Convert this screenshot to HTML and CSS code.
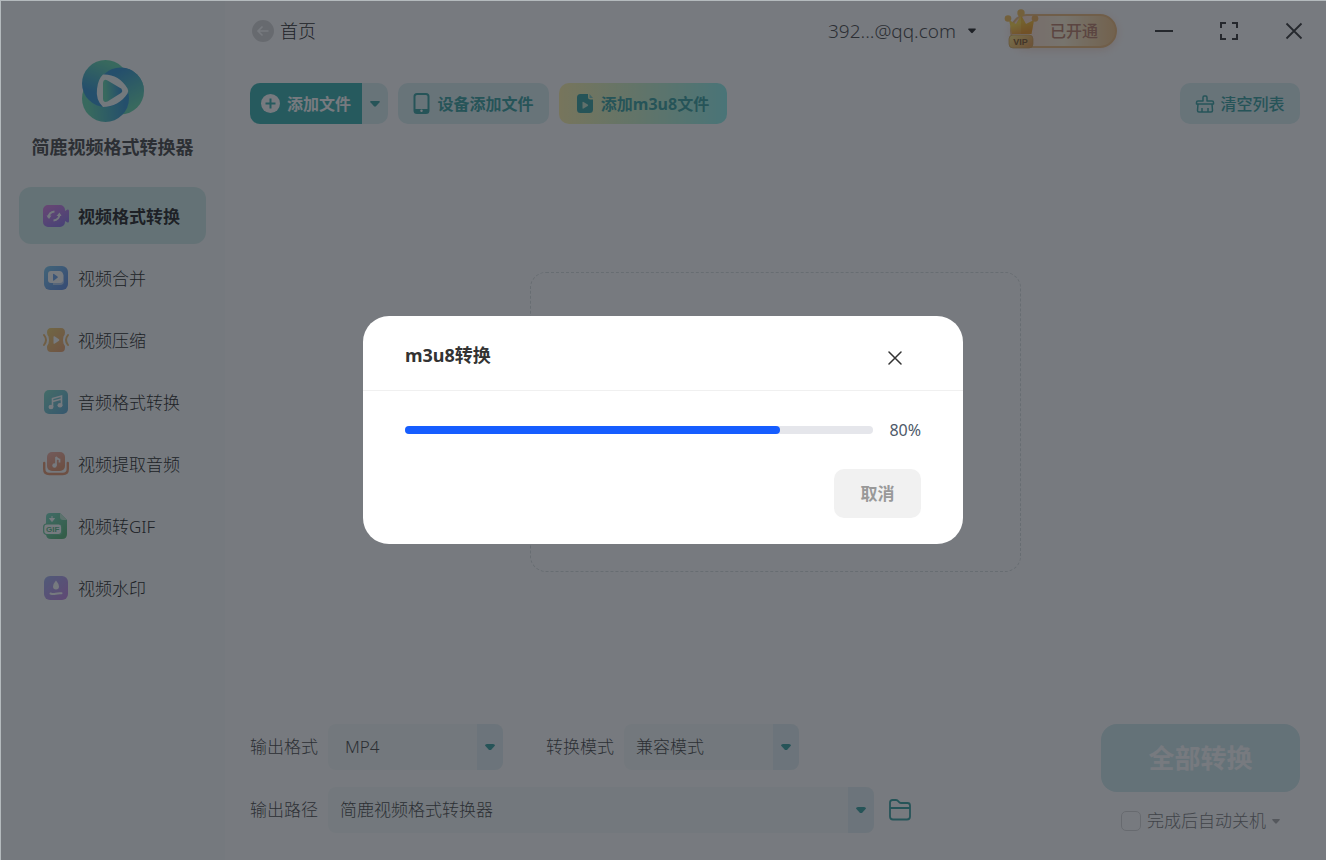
FILE: index.html
```html
<!DOCTYPE html>
<html lang="zh-CN">
<head>
    <meta charset="UTF-8">
    <meta name="viewport" content="width=device-width, initial-scale=1.0">
    <title>简鹿视频格式转换器</title>
    <link rel="stylesheet" href="styles.css">
</head>
<body>
    <div class="window">
        <!-- Sidebar -->
        <aside class="sidebar">
            <svg class="logo" viewBox="0 0 62 62" aria-hidden="true">
                <defs>
                    <linearGradient id="logo-a" x1="0.7" y1="0" x2="0.3" y2="1"><stop offset="0.1" stop-color="#48cf9f"/><stop offset="0.75" stop-color="#0f82c8"/></linearGradient>
                    <linearGradient id="logo-b" x1="0.2" y1="0.1" x2="0.7" y2="1"><stop offset="0.1" stop-color="#0f82c8"/><stop offset="0.9" stop-color="#48cf9f"/></linearGradient>
                    <linearGradient id="logo-c" x1="0" y1="0.5" x2="1" y2="0.4"><stop offset="0.1" stop-color="#48cf9f"/><stop offset="0.9" stop-color="#0f82c8"/></linearGradient>
                    <clipPath id="logo-top"><path d="M15 0H62V31H15z"/></clipPath>
                </defs>
                <circle cx="38.500" cy="31" r="23.500" fill="url(#logo-b)"/>
                <circle cx="23.500" cy="38.500" r="23.500" fill="url(#logo-c)"/>
                <circle cx="23.500" cy="23.500" r="23.500" fill="url(#logo-a)"/>
                <circle cx="38.500" cy="31" r="23.500" fill="url(#logo-b)" clip-path="url(#logo-top)"/>
                <path d="M21 14.500C31 14 40 19 45.500 28.500Q47 31 45.500 33.500C40 42 31 47 21 47Q13.500 40 15 29Q16 19 21 14.500z" fill="#f6fcfb"/>
                <path d="M21 22.500Q21.500 18.500 25.500 20.500L39 28.500Q41.500 31 39 33L25.500 41.500Q21.500 43 21 39z" fill="url(#logo-c)"/>
            </svg>
            <h1 class="app-name">简鹿视频格式转换器</h1>
            <nav class="menu">
                <a class="menu-item active" href="#">
                    <svg viewBox="0 0 26 26" aria-hidden="true">
                        <defs><linearGradient id="g1" x1="0" y1="0" x2="0.6" y2="1"><stop stop-color="#e05ae0"/><stop offset="1" stop-color="#7a50ea"/></linearGradient></defs>
                        <path d="M5 2h12a5 5 0 0 1 5 5v1l2.500-1.500Q26 6 26 8v10q0 2-1.500 1.500L22 18v1a5 5 0 0 1-5 5H5a5 5 0 0 1-5-5V7a5 5 0 0 1 5-5z" fill="url(#g1)"/>
                        <path d="M5.500 14.500Q6 9 11.500 8.500M16.500 11.500Q16 17 10.500 17.500" fill="none" stroke="#fff" stroke-width="2"/>
                        <path d="M3.500 12.500h5l-2.500 3.500zM13.500 13h5l-2-3.500z" fill="#fff"/>
                    </svg>
                    <span>视频格式转换</span>
                </a>
                <a class="menu-item" href="#">
                    <svg viewBox="0 0 26 26" aria-hidden="true">
                        <defs><linearGradient id="g2" x1="0" y1="0" x2="1" y2="1"><stop stop-color="#50b8ea"/><stop offset="1" stop-color="#2a62dc"/></linearGradient></defs>
                        <rect x="1" y="1" width="24" height="24" rx="6" fill="url(#g2)"/>
                        <path d="M9 7h9l3 3v6q0 4-4 4H10z" fill="#fff" opacity="0.500"/>
                        <path d="M8 6h8q4 0 4 4v5q0 3-3 3H8q-3 0-3-3V9q0-3 3-3z" fill="#fff"/>
                        <path d="M10 9.500q0-1 1-.5l3.500 2.500q.8.700 0 1.200L11 15.500q-1 .500-1-.5z" fill="#3a86e4"/>
                    </svg>
                    <span>视频合并</span>
                </a>
                <a class="menu-item" href="#">
                    <svg viewBox="0 0 26 26" aria-hidden="true">
                        <defs><linearGradient id="g3" x1="0" y1="0" x2="0.8" y2="1"><stop stop-color="#ecc03c"/><stop offset="1" stop-color="#e8863c"/></linearGradient></defs>
                        <path d="M8 1h10q4 0 4 4.500 0 2-1.500 4-1 3.500 0 7 1.500 2 1.500 4 0 4.500-4 4.500H8q-4 0-4-4.500 0-2 1.500-4 1-3.500 0-7Q4 7.500 4 5.500 4 1 8 1z" fill="url(#g3)"/>
                        <path d="M1 8q4 5 0 10M25 8q-4 5 0 10" fill="none" stroke="#eaa43c" stroke-width="2" stroke-linecap="round"/>
                        <path d="M10.500 10q0-1.200 1-.7l4.500 3q.8.700 0 1.400l-4.500 3q-1 .500-1-.7z" fill="#fff"/>
                    </svg>
                    <span>视频压缩</span>
                </a>
                <a class="menu-item" href="#">
                    <svg viewBox="0 0 26 26" aria-hidden="true">
                        <defs><linearGradient id="g4" x1="0" y1="0" x2="1" y2="1"><stop stop-color="#58d2b4"/><stop offset="1" stop-color="#2a8cc8"/></linearGradient></defs>
                        <rect x="1" y="1" width="24" height="24" rx="5" fill="url(#g4)"/>
                        <path d="M9.500 18V9.500L18.500 7V16M9.500 12.500L18.500 10" fill="none" stroke="#fff" stroke-width="1.600"/>
                        <ellipse cx="8" cy="18" rx="2.500" ry="2.200" fill="#fff"/><ellipse cx="17" cy="16.200" rx="2.500" ry="2.200" fill="#fff"/>
                    </svg>
                    <span>音频格式转换</span>
                </a>
                <a class="menu-item" href="#">
                    <svg viewBox="0 0 26 26" aria-hidden="true">
                        <defs><linearGradient id="g5" x1="0" y1="0" x2="0.5" y2="1"><stop stop-color="#f0988a"/><stop offset="1" stop-color="#e0743c"/></linearGradient></defs>
                        <path d="M1.200 12v6q0 5 5 5h13.600q5 0 5-5v-6" fill="none" stroke="#e0743c" stroke-width="2.400" stroke-linecap="round"/>
                        <rect x="4" y="1" width="18" height="19" rx="5" fill="url(#g5)"/>
                        <path d="M13 14.500V6q1 2 3.500 2.500v3" fill="none" stroke="#fff" stroke-width="1.700"/>
                        <circle cx="11.500" cy="14.500" r="2.200" fill="#fff"/>
                    </svg>
                    <span>视频提取音频</span>
                </a>
                <a class="menu-item" href="#">
                    <svg viewBox="0 0 26 26" aria-hidden="true">
                        <defs><linearGradient id="g6" x1="0" y1="0" x2="0.7" y2="1"><stop stop-color="#4ccfae"/><stop offset="1" stop-color="#22a04c"/></linearGradient></defs>
                        <path d="M7 0h10l7 7v14q0 5-5 5H8q-5 0-5-5V4q0-4 4-4z" fill="url(#g6)"/>
                        <path d="M17 0v4q0 3 3 3h4z" fill="#a8e6c4"/>
                        <path d="M9 3v3M6.500 5.500h5L9 8.500z" stroke="#fff" fill="#fff"/>
                        <rect x="0.700" y="11" width="18" height="10.500" rx="3" fill="#fff" stroke="#35b878" stroke-width="1.200"/>
                        <text class="gif-mark" x="9.700" y="19.200" text-anchor="middle">GIF</text>
                    </svg>
                    <span>视频转GIF</span>
                </a>
                <a class="menu-item" href="#">
                    <svg viewBox="0 0 26 26" aria-hidden="true">
                        <defs><linearGradient id="g7" x1="0" y1="0" x2="1" y2="1"><stop stop-color="#8098ea"/><stop offset="1" stop-color="#b45adc"/></linearGradient></defs>
                        <rect x="1" y="1" width="24" height="24" rx="6" fill="url(#g7)"/>
                        <path d="M13 5.500Q16 9 16 11.500a3 3 0 0 1-6 0Q10 9 13 5.500z" fill="#fff"/>
                        <path d="M7.500 18.500q2.500 1 5 .3t6-.5" fill="none" stroke="#fff" stroke-width="2" stroke-linecap="round"/>
                    </svg>
                    <span>视频水印</span>
                </a>
            </nav>
        </aside>

        <main class="main">
            <!-- Title bar -->
            <header class="titlebar">
                <button class="back" type="button">
                    <svg width="22" height="22" viewBox="0 0 22 22" aria-hidden="true"><circle cx="11" cy="11" r="11" fill="#d8d8d8"/><path d="M16.500 11H6M10.500 6.500L6 11l4.500 4.500" fill="none" stroke="#fff" stroke-width="1.600"/></svg>
                    首页
                </button>
                <button class="account" type="button">
                    392...@qq.com
                    <svg width="8" height="6" viewBox="0 0 10 6" aria-hidden="true"><path d="M1 0h8q1.300.300.600 1.200L6 5.300q-1 .9-2 0L.4 1.200Q-.3.300 1 0z" fill="currentColor"/></svg>
                </button>
                <button class="vip" type="button">
                    <svg class="crown" width="36" height="41" viewBox="0 0 36 41" aria-hidden="true">
                        <defs>
                            <linearGradient id="crown" x1="0" y1="0" x2="0.4" y2="1"><stop stop-color="#ffc93a"/><stop offset="0.5" stop-color="#ffd84a"/><stop offset="1" stop-color="#f5a035"/></linearGradient>
                            <linearGradient id="plate" x1="0" y1="0" x2="1" y2="0.6"><stop stop-color="#ffe680"/><stop offset="1" stop-color="#e8a050"/></linearGradient>
                        </defs>
                        <path d="M5 11l7 4 5-9 5 9 8-4-2.500 14H8z" fill="url(#crown)"/>
                        <path d="M17 6l5 9 8-4-2.500 14H17z" fill="#e88a00" opacity="0.300"/>
                        <circle cx="17" cy="4" r="3.700" fill="#f5bf55"/><circle cx="4" cy="9.500" r="3.300" fill="#f5bf55"/><circle cx="31" cy="9.500" r="3.300" fill="#f0b055"/>
                        <rect x="5" y="26" width="24" height="13" rx="4" fill="url(#plate)" stroke="#d0a050" stroke-width="0.700"/>
                        <text class="vip-mark" x="16.500" y="36" text-anchor="middle">VIP</text>
                    </svg>
                    已开通
                </button>
                <div class="window-controls">
                    <button type="button" aria-label="最小化"><svg width="18" height="18" viewBox="0 0 18 18"><path d="M0 9h18" stroke="currentColor" stroke-width="2"/></svg></button>
                    <button type="button" aria-label="最大化"><svg width="18" height="18" viewBox="0 0 18 18"><path d="M1 6V1h5M12 1h5v5M17 12v5h-5M6 17H1v-5" fill="none" stroke="currentColor" stroke-width="2"/></svg></button>
                    <button type="button" aria-label="关闭"><svg width="18" height="18" viewBox="0 0 18 18"><path d="M1.500 1.500l15 15M16.500 1.500l-15 15" stroke="currentColor" stroke-width="1.800"/></svg></button>
                </div>
            </header>

            <!-- Toolbar -->
            <div class="toolbar">
                <div class="split">
                    <button class="btn primary" type="button">
                        <svg width="19" height="19" viewBox="0 0 19 19" aria-hidden="true"><circle cx="9.500" cy="9.500" r="9.500" fill="#fff"/><path d="M9.500 4.500v10M4.500 9.500h10" stroke="#36b0ad" stroke-width="2"/></svg>
                        添加文件
                    </button>
                    <button class="split-arrow" type="button" aria-label="更多">
                        <svg width="10" height="6" viewBox="0 0 10 6"><path d="M1 0h8q1.300.300.600 1.200L6 5.300q-1 .9-2 0L.4 1.200Q-.3.300 1 0z" fill="currentColor"/></svg>
                    </button>
                </div>
                <button class="btn device" type="button">
                    <svg width="17" height="21" viewBox="0 0 17 21" aria-hidden="true"><rect x="1.500" y="1" width="14" height="19" rx="2.500" fill="none" stroke="currentColor" stroke-width="2"/><path d="M2 16h13v3H2z" fill="currentColor"/><circle cx="8.500" cy="17.800" r="1.200" fill="#fff"/></svg>
                    设备添加文件
                </button>
                <button class="btn m3u8" type="button">
                    <svg width="17" height="19" viewBox="0 0 17 19" aria-hidden="true"><path d="M3.500 0H11v3q0 2.500 2.500 2.500H16V15.500q0 3.500-3.500 3.500h-9Q0 19 0 15.500v-12Q0 0 3.500 0z" fill="currentColor"/><path d="M12.500 0L16 4h-3.500z" fill="#7cc9c0"/><path d="M5.500 8.500v5.500q0 1 1 .5l4.200-2.500q1-.7 0-1.400L6.500 8q-1-.5-1 .5z" fill="#c5e6cc"/></svg>
                    添加m3u8文件
                </button>
                <button class="btn clear" type="button">
                    <svg width="20" height="18" viewBox="0 0 20 18" aria-hidden="true"><path d="M1.500 9V7.500Q1.500 6 3 6h5V2.500Q8 1 9.200 1h1.600Q12 1 12 2.500V6h5q1.500 0 1.500 1.500V9zM3 9l-.5 6.500q0 1.500 1.500 1.500h12q1.500 0 1.500-1.500L17 9M7 13v4M13 13v4" fill="none" stroke="currentColor" stroke-width="1.500" stroke-linejoin="round"/></svg>
                    清空列表
                </button>
            </div>

            <div class="workspace">
                <div class="dropzone"></div>
            </div>

            <!-- Output settings -->
            <footer class="footer">
                <div class="settings">
                    <div class="row">
                        <label for="format">输出格式</label>
                        <div class="picker format">
                            <select id="format"><option>MP4</option></select>
                            <span class="picker-arrow"></span>
                        </div>
                        <label class="mode-label" for="mode">转换模式</label>
                        <div class="picker">
                            <select id="mode"><option>兼容模式</option></select>
                            <span class="picker-arrow"></span>
                        </div>
                    </div>
                    <div class="row">
                        <label for="path">输出路径</label>
                        <div class="picker path">
                            <select id="path"><option>简鹿视频格式转换器</option></select>
                            <span class="picker-arrow"></span>
                        </div>
                        <button class="folder" type="button" aria-label="打开文件夹">
                            <svg width="22" height="22" viewBox="0 0 22 22"><path d="M1 17.500V3.500Q1 1 3.500 1H7q1.500 0 2.500 1.500t2.500 1.500h6.500Q21 4 21 6.500v11q0 3-3 3H4q-3 0-3-3zM1 9h20" fill="none" stroke="currentColor" stroke-width="1.800"/></svg>
                        </button>
                    </div>
                </div>
                <div class="actions">
                    <button class="convert-all" type="button">全部转换</button>
                    <div class="shutdown">
                        <input type="checkbox" id="shutdown">
                        <label for="shutdown">完成后自动关机</label>
                        <svg width="8" height="5" viewBox="0 0 10 6" aria-hidden="true"><path d="M1 0h8q1.300.300.600 1.200L6 5.300q-1 .9-2 0L.4 1.200Q-.3.300 1 0z" fill="currentColor"/></svg>
                    </div>
                </div>
            </footer>
        </main>
    </div>

    <!-- Progress dialog -->
    <div class="mask">
        <div class="dialog" role="dialog" aria-labelledby="dialog-title">
            <div class="dialog-header">
                <h2 id="dialog-title">m3u8转换</h2>
                <button class="dialog-close" type="button" aria-label="关闭">
                    <svg width="14" height="14" viewBox="0 0 14 14"><path d="M1 1l12 12M13 1L1 13" stroke="currentColor" stroke-width="1.500" stroke-linecap="round"/></svg>
                </button>
            </div>
            <div class="dialog-body">
                <div class="progress-row">
                    <progress id="progress" value="80" max="100"></progress>
                    <label for="progress">80%</label>
                </div>
                <button class="cancel" type="button">取消</button>
            </div>
        </div>
    </div>
</body>
</html>
```
FILE: styles.css
```css
/* Global Styles */
* {
    box-sizing: border-box;
}
body {
    margin: 0;
    font-family: "Noto Sans", "Noto Sans CJK SC", sans-serif;
    font-size: 17px;
    font-weight: 300;
    line-height: 24px;
    color: #222;
    background: #fff;
}
/* thin light edge of the app window */
body::after {
    content: "";
    position: fixed;
    inset: 0;
    border-top: 1px solid #b4babd;
    border-left: 1px solid #b4babd;
    pointer-events: none;
}
button, select {
    font: inherit;
    color: inherit;
    background: none;
    border: none;
    padding: 0;
    margin: 0;
    cursor: pointer;
}
svg {
    display: block;
    flex: none;
}
h1, h2 {
    margin: 0;
    font-size: 18px;
    font-weight: bold;
}
.window {
    display: flex;
    min-height: 100vh;
}

/* Sidebar */
.sidebar {
    flex: none;
    width: 225px;
    padding: 60px 19px 0;
    background: #fafdfc;
}
.logo {
    width: 62px;
    height: 62px;
    margin: 0 auto;
    opacity: 0.85;
}
.app-name {
    margin: 13px 0 28px;
    text-align: center;
    white-space: nowrap;
    color: #444;
}
.menu {
    display: flex;
    flex-direction: column;
    gap: 5px;
}
.menu-item {
    display: flex;
    align-items: center;
    gap: 9px;
    height: 57px;
    padding: 0 24px;
    border-radius: 12px;
    color: #222;
    text-decoration: none;
    white-space: nowrap;
}
.menu-item span {
    padding-top: 2px;
}
.menu-item svg {
    width: 26px;
    height: 26px;
    opacity: 0.75;
}
.menu-item.active {
    background: #d0ece8;
    font-weight: bold;
}
.gif-mark {
    font: bold 8px "Liberation Sans", sans-serif;
    fill: #26a861;
}

/* Main */
.main {
    flex: 1;
    display: flex;
    flex-direction: column;
    padding: 0 26px 27px 25px;
}
.titlebar {
    display: flex;
    align-items: center;
    height: 62px;
}
.back {
    display: flex;
    align-items: center;
    gap: 6px;
    margin: 0 auto 0 2px;
    font-size: 18px;
}
.account {
    display: flex;
    align-items: center;
    gap: 12px;
    font-size: 19px;
    color: #444;
}
.account svg {
    color: #222;
}
.vip {
    position: relative;
    width: 107px;
    height: 34px;
    margin-left: 34px;
    padding: 0 18px 0 38px;
    border: 2px solid #eeb878;
    border-radius: 17px;
    background: linear-gradient(90deg, #ffd8cc, #fff0d2 50%, #f2c284);
    box-shadow: 0 2px 8px rgba(233, 150, 110, 0.3);
    color: #b87a64;
    font-size: 16px;
    font-weight: 500;
    line-height: 30px;
    white-space: nowrap;
}
.crown {
    position: absolute;
    left: -8px;
    top: -7px;
}
.vip-mark {
    font: bold 9px "Liberation Sans", sans-serif;
    fill: #7d5428;
}
.window-controls {
    display: flex;
    gap: 47px;
    margin: 0 -3px 0 38px;
    color: #333;
}

/* Toolbar */
.toolbar {
    display: flex;
    gap: 10px;
    margin-top: 21px;
}
.split {
    display: flex;
}
.btn {
    display: flex;
    align-items: center;
    justify-content: center;
    gap: 7px;
    height: 41px;
    border-radius: 10px;
    background: #d9eff1;
    color: #36a09f;
    font-size: 16px;
    font-weight: bold;
    white-space: nowrap;
}
.btn.primary {
    width: 112px;
    border-radius: 10px 0 0 10px;
    background: #36b0ad;
    color: #fff;
}
.split-arrow {
    display: flex;
    align-items: center;
    justify-content: center;
    width: 26px;
    border-radius: 0 10px 10px 0;
    background: #d9eff1;
    color: #36a09f;
}
.btn.device {
    width: 151px;
}
.btn.m3u8 {
    width: 168px;
    background: linear-gradient(90deg, #fff2a8, #8ef0ec);
}
.btn.clear {
    width: 120px;
    gap: 5px;
    margin-left: auto;
    font-weight: 500;
}

.workspace {
    flex: 1;
    display: flex;
    align-items: center;
    justify-content: center;
    padding-bottom: 4px;
}
.dropzone {
    width: 491px;
    height: 300px;
    border: 1px dashed #d8dede;
    border-radius: 16px;
}

/* Output settings */
.footer {
    display: flex;
    justify-content: space-between;
    color: #444;
}
.settings {
    display: flex;
    flex-direction: column;
    gap: 17px;
}
.row {
    display: flex;
    align-items: center;
    gap: 10px;
}
.mode-label {
    margin-left: 33px;
}
.picker {
    display: flex;
    width: 175px;
    height: 46px;
    border-radius: 8px;
    background: #f5fbf9;
    overflow: hidden;
}
.picker select {
    flex: 1;
    appearance: none;
    padding-left: 12px;
    outline: none;
}
.picker.format select {
    padding-left: 17px;
}
.picker.path {
    width: 546px;
}
.picker-arrow {
    display: flex;
    align-items: center;
    justify-content: center;
    width: 26px;
    background: #e4f1f4;
}
.picker-arrow::before {
    content: "";
    width: 10px;
    height: 6px;
    border-radius: 2px;
    background: #36a09f;
    clip-path: polygon(0 0, 100% 0, 100% 25%, 60% 100%, 40% 100%, 0 25%);
}
.folder {
    margin-left: 5px;
    color: #36a09f;
}
.actions {
    display: flex;
    flex-direction: column;
    align-items: center;
    gap: 17px;
}
.convert-all {
    width: 199px;
    height: 68px;
    border-radius: 16px;
    background: #cfeaed;
    color: #fff;
    font-size: 26px;
    font-weight: bold;
}
.shutdown {
    display: flex;
    align-items: center;
    gap: 6px;
    color: #777;
}
.shutdown svg {
    color: #aaa;
}
.shutdown input {
    appearance: none;
    width: 20px;
    height: 20px;
    margin: 0;
    border: 1px solid #d8d8d8;
    border-radius: 5px;
}

/* Progress dialog */
.mask {
    position: fixed;
    inset: 0;
    display: flex;
    align-items: center;
    justify-content: center;
    background: rgba(29, 33, 41, 0.6);
}
.dialog {
    width: 600px;
    border-radius: 26px;
    background: #fff;
}
.dialog-header {
    display: flex;
    align-items: center;
    justify-content: space-between;
    padding: 27px 61px 23px 42px;
    border-bottom: 1px solid #f0f0f0;
    color: #333;
}
.dialog-close {
    padding-top: 5px;
    color: #333;
}
.dialog-body {
    display: flex;
    flex-direction: column;
    align-items: flex-end;
    gap: 27px;
    padding: 27px 42px 26px;
}
.progress-row {
    display: flex;
    align-items: center;
    gap: 16px;
    width: 100%;
    color: #4e5969;
    font-size: 16px;
    font-weight: normal;
}
progress {
    flex: 1;
    appearance: none;
    height: 8px;
    border: none;
}
progress::-webkit-progress-bar {
    border-radius: 4px;
    background: #e5e6eb;
}
progress::-webkit-progress-value {
    border-radius: 4px;
    background: #165dff;
}
.cancel {
    width: 87px;
    height: 49px;
    border-radius: 10px;
    background: #f1f1f1;
    color: #999;
    font-weight: bold;
}
```
